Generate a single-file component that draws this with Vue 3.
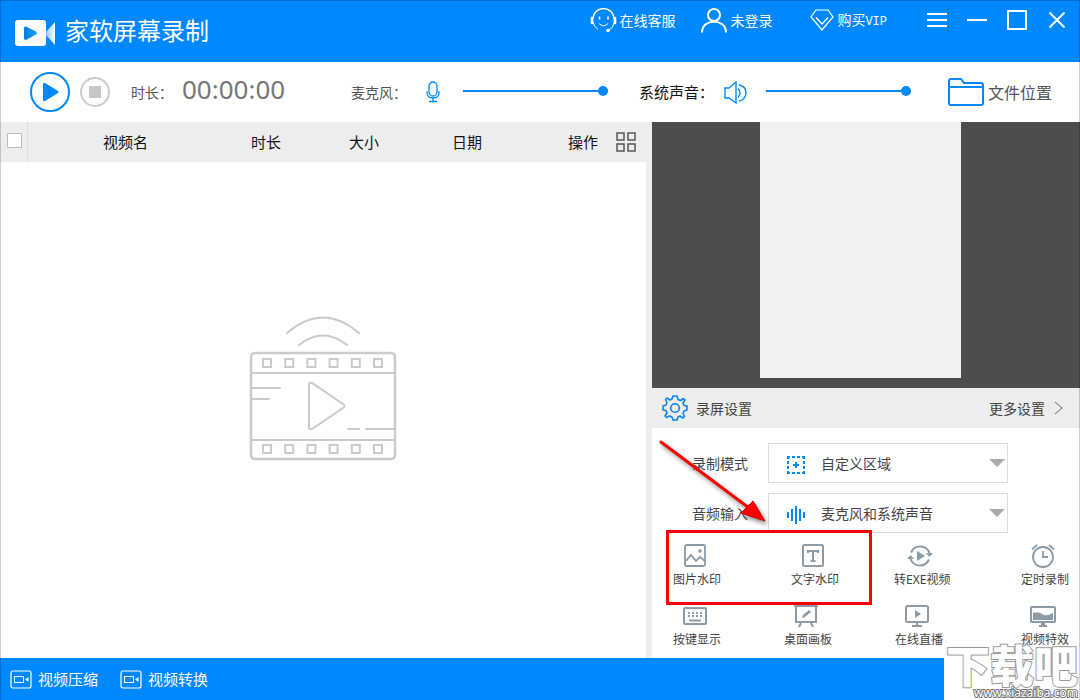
<script setup>
import { ref } from 'vue'

const micVolume = ref(100)
const systemVolume = ref(100)
const mode = ref('自定义区域')
const audio = ref('麦克风和系统声音')
const allSelected = ref(false)
const holes = [0, 1, 2, 3, 4, 5]
</script>

<template>
  <div class="app">
    <header class="titlebar">
      <svg class="logo" width="40" height="26" viewBox="0 0 40 26">
        <defs>
          <linearGradient id="lens" x1="0" x2="1"><stop offset="0" stop-color="#8fcbff" /><stop offset="1" stop-color="#fff" /></linearGradient>
          <linearGradient id="tri" x1="0" x2="1"><stop offset="0" stop-color="#0a78d8" /><stop offset="1" stop-color="#12a8ff" /></linearGradient>
        </defs>
        <rect width="31" height="26" rx="3" fill="#fff" />
        <path d="M31 12 40 2v23l-9-10z" fill="url(#lens)" />
        <path d="M9 8Q9 6 11 6.500L21 11.500Q23 13 21 14.500L11 20Q9 20.500 9 18z" fill="url(#tri)" />
      </svg>
      <h1>家软屏幕录制</h1>
      <nav class="links">
        <a href="#" class="service">
          <svg width="27" height="25" viewBox="0 0 27 25" fill="none" stroke="#fff">
            <path d="M3 11A10.500 10.500 0 0 1 24 11" stroke-width="1.300" />
            <path d="M2 10v5M25 10v5" stroke-width="2.600" stroke-linecap="round" />
            <path d="M3 14Q4 19 8 21.500M24 15Q23 20 19 22" />
            <circle cx="18" cy="22.500" r="1.800" fill="#fff" stroke="none" />
            <path d="M9.500 8.500v3M18 8.500v3" stroke-width="1.600" />
            <path d="M9 15.500q4.500 4.500 9 0" />
          </svg>
          <span>在线客服</span>
        </a>
        <a href="#" class="login">
          <svg width="26" height="25" viewBox="0 0 26 25" fill="none" stroke="#fff" stroke-width="2">
            <circle cx="13" cy="7" r="6" /><path d="M1 24.500C1 10 25 10 25 24.500" />
          </svg>
          <span>未登录</span>
        </a>
        <a href="#" class="vip">
          <svg width="24" height="22" viewBox="0 0 24 22" fill="none" stroke="#fff" stroke-width="1.200">
            <path d="M6 1h12l5 7-11 13L1 8zM6 8.500l6 6.500 6-6.500" />
          </svg>
          <span>购买<span class="mono">VIP</span></span>
        </a>
      </nav>
      <div class="window">
        <button type="button" aria-label="菜单"><svg width="20" height="20"><path d="M0 4h20M0 10h20M0 16h20" /></svg></button>
        <button type="button" aria-label="最小化"><svg width="20" height="20"><path d="M0 10h20" /></svg></button>
        <button type="button" aria-label="最大化"><svg width="20" height="20"><path d="M1 1h18v18H1z" /></svg></button>
        <button type="button" aria-label="关闭"><svg width="20" height="20"><path d="M2.500 2.500l15 15m0-15l-15 15" /></svg></button>
      </div>
    </header>

    <section class="toolbar">
      <button type="button" class="play" aria-label="开始录制">
        <svg width="18" height="20" viewBox="0 0 18 20"><path d="M1 2Q1 0 3 1L16 9q1.500 1 0 2L3 19q-2 1-2-1z" fill="#0088ff" /></svg>
      </button>
      <button type="button" class="stop" aria-label="停止"><i></i></button>
      <span class="label time-label">时长：</span>
      <output class="timer">00:00:00</output>
      <label class="label mic-label" for="mic">麦克风：</label>
      <svg class="mic" width="14" height="22" viewBox="0 0 14 22" fill="none" stroke="#0088ff" stroke-width="1.300">
        <rect x="3" y="1" width="8" height="14" rx="4" />
        <path d="M1 10v1.500q0 5.500 6 5.500t6-5.500V10M7 17v3.500M3 20.500h8" />
      </svg>
      <input id="mic" v-model="micVolume" type="range" min="0" max="100" />
      <label class="system-label" for="system">系统声音：</label>
      <svg class="speaker" width="24" height="24" viewBox="0 0 24 24" fill="none" stroke="#0088ff" stroke-width="1.400">
        <path d="M1 7h4l7-6v21l-7-5H1zM14 7.500q4 4.500 0 9M15 4q7.500 1.500 7 8.500Q21 19 15 20" />
      </svg>
      <input id="system" v-model="systemVolume" type="range" min="0" max="100" />
      <button type="button" class="folder">
        <svg width="36" height="28" viewBox="0 0 36 28" fill="none" stroke="#0088ff" stroke-width="2">
          <path d="M1 9V3q0-2 2-2h10l3 4h17q2 0 2 2v2zM1 9v16q0 2 2 2h30q2 0 2-2V9" />
        </svg>
        <span>文件位置</span>
      </button>
    </section>

    <main>
      <section class="videos">
        <table>
          <thead>
            <tr>
              <th class="c-check"><input v-model="allSelected" type="checkbox" aria-label="全选" /></th>
              <th class="c-name">视频名</th>
              <th class="c-time">时长</th>
              <th class="c-size">大小</th>
              <th class="c-date">日期</th>
              <th class="c-act">
                <div class="act">
                  <span>操作</span>
                  <button type="button" aria-label="网格视图">
                    <svg width="20" height="20" viewBox="0 0 20 20" fill="none" stroke="#555" stroke-width="1.500">
                      <path d="M1 1h7v7H1zM12 1h7v7h-7zM1 12h7v7H1zM12 12h7v7h-7z" />
                    </svg>
                  </button>
                </div>
              </th>
            </tr>
          </thead>
        </table>
        <div class="empty">
          <svg width="148" height="146" viewBox="0 0 148 146" fill="none" stroke="#cbcbcb" stroke-width="2" stroke-linecap="round">
            <path d="M38 17Q74-14 110 17M50 29q24-19 48 0" />
            <rect x="2" y="37" width="144" height="106" rx="4" stroke-width="2.500" />
            <path d="M2 57h144M2 124h144M3 72h28M3 83h17M99 113h11M117 113h28" />
            <path d="M60 69q0-3 3-2l31 21q3 2 0 4l-31 21q-3 1-3-2z" />
            <g stroke-linecap="butt">
              <rect v-for="n in holes" :key="'t' + n" :x="14 + n * 22.200" y="43" width="8" height="8" />
              <rect v-for="n in holes" :key="'b' + n" :x="14 + n * 22.200" y="129" width="8" height="8" />
            </g>
          </svg>
        </div>
      </section>

      <aside>
        <div class="preview"><div class="screen"></div></div>
        <div class="settings-head">
          <svg width="26" height="26" viewBox="-13 -13 26 26" fill="none" stroke="#0a84e8" stroke-width="1.600" stroke-linejoin="round">
            <path d="M-2-12H2L3-8.500 5.500-7.500 8.500-9.500 10-8 8-5 9-2.500 12-2V2L9 3 8 5.500 9.500 8.500 8 10 5 8 3 9 2 12H-2L-3 9-5.500 8-8.500 9.500-10 8-8 5-9 2.500-12 2V-2L-9-3-8-5.500-9.500-8.500-8-10-5-8-3-9z" />
            <circle r="4.300" />
          </svg>
          <h2>录屏设置</h2>
          <a href="#">更多设置
            <svg width="9" height="14" viewBox="0 0 9 14" fill="none" stroke="#666"><path d="M1 1l7 6-7 6" /></svg>
          </a>
        </div>
        <div class="settings">
          <div class="field">
            <label for="mode">录制模式</label>
            <div class="picker">
              <svg class="lead" width="20" height="20" viewBox="0 0 20 20" fill="none" stroke="#0088ff" stroke-width="2">
                <path d="M1 2h3M6 2h3M11 2h3M16 2h3M1 18h3M6 18h3M11 18h3M16 18h3M2 1v3M2 6v3M2 11v3M2 16v3M18 1v3M18 6v3M18 11v3M18 16v3M7 10h6M10 7v6" />
              </svg>
              <select id="mode" v-model="mode"><option>自定义区域</option></select>
              <svg class="caret" width="16" height="8"><path d="M0 0h16L8 8z" fill="#aaa" /></svg>
            </div>
          </div>
          <div class="field">
            <label for="audio">音频输入</label>
            <div class="picker">
              <svg class="lead" width="20" height="20" viewBox="0 0 20 20" fill="none" stroke="#0088ff" stroke-width="2">
                <path d="M2 7v6M6 4v12M10 1v18M14 4v12M18 7v6" />
              </svg>
              <select id="audio" v-model="audio"><option>麦克风和系统声音</option></select>
              <svg class="caret" width="16" height="8"><path d="M0 0h16L8 8z" fill="#aaa" /></svg>
            </div>
          </div>

          <div class="tools">
            <div class="row first">
              <button type="button">
                <svg width="26" height="24" viewBox="0 0 26 24" fill="none" stroke="#8c9ba5" stroke-width="1.800">
                  <rect x="3" y="1" width="20" height="21" rx="1.500" /><path d="M4 17l5-6 5 6 4-4 5 4" /><circle cx="18" cy="7" r="1.800" fill="#8c9ba5" stroke="none" />
                </svg>
                <span>图片水印</span>
              </button>
              <button type="button">
                <svg width="26" height="24" viewBox="0 0 26 24" fill="none" stroke="#8c9ba5" stroke-width="2">
                  <rect x="3" y="1" width="20" height="21" rx="1.500" /><path d="M8 9V7h10v2M13 7v10M10.500 17h5" />
                </svg>
                <span>文字水印</span>
              </button>
              <button type="button">
                <svg width="26" height="24" viewBox="0 0 26 24" fill="none" stroke="#8c9ba5" stroke-width="2">
                  <path d="M4 8.500A10 10 0 0 1 22.500 9M22 15.500A10 10 0 0 1 3.500 15" />
                  <path d="M19 9h7l-3.500 4zM0 15h7l-3.500-4zM10 7l8 5-8 5z" fill="#8c9ba5" stroke="none" />
                </svg>
                <span>转EXE视频</span>
              </button>
              <button type="button">
                <svg width="26" height="24" viewBox="0 0 26 24" fill="none" stroke="#8c9ba5" stroke-width="1.800">
                  <circle cx="13" cy="13" r="10" /><path d="M13 7v6h5" /><path d="M2 5.500 7 1M24 5.500 19 1" />
                </svg>
                <span>定时录制</span>
              </button>
            </div>
            <div class="row second">
              <button type="button">
                <svg width="26" height="24" viewBox="0 0 26 24" fill="none" stroke="#8c9ba5" stroke-width="2">
                  <rect x="2" y="4" width="22" height="16" rx="1" />
                  <path d="M6 9h14M6 12h14" stroke-dasharray="2 2" /><path d="M7 16.500h12" />
                </svg>
                <span>按键显示</span>
              </button>
              <button type="button">
                <svg width="26" height="24" viewBox="0 0 26 24" fill="none" stroke="#8c9ba5" stroke-width="2">
                  <path d="M1 2h24M3 2v16h20V2M8 19l-2 4M18 19l2 4" /><path d="M9 14l1-3 6-5 2 2-6 5z" fill="#8c9ba5" stroke="none" />
                </svg>
                <span>桌面画板</span>
              </button>
              <button type="button">
                <svg width="26" height="24" viewBox="0 0 26 24" fill="none" stroke="#8c9ba5" stroke-width="2">
                  <rect x="2" y="2" width="22" height="16" rx="1.500" /><path d="M13 18v4M8 22h10" /><path d="M11 6l6 4-6 4z" fill="#8c9ba5" stroke="none" />
                </svg>
                <span>在线直播</span>
              </button>
              <button type="button">
                <svg width="26" height="24" viewBox="0 0 26 24" fill="none" stroke="#8c9ba5" stroke-width="2">
                  <rect x="1" y="3" width="24" height="15" rx="1" /><path d="M9 22h8M11 20h4" />
                  <path d="M3 9q5-2 9 1t11-1v7H3z" fill="#8c9ba5" stroke="none" />
                </svg>
                <span>视频特效</span>
              </button>
            </div>
          </div>

          <div class="highlight"></div>
          <svg class="arrow" width="124" height="104" viewBox="0 0 124 104">
            <path d="M9 14 97 80" stroke="#f00" stroke-width="3" stroke-linecap="round" />
            <path d="M113 93 101 73 95 79 89 85z" fill="#f00" stroke="#c00" />
          </svg>
        </div>
      </aside>
    </main>

    <footer>
      <button type="button">
        <svg width="22" height="19" viewBox="0 0 22 19" fill="none" stroke="#fff" stroke-width="1.200">
          <rect x="1" y="1" width="20" height="17" rx="2" /><rect x="4.500" y="6.500" width="9" height="6" stroke-width="1" /><path d="M15 9.500 18.500 7v5z" fill="#fff" stroke="none" />
        </svg>
        <span>视频压缩</span>
      </button>
      <button type="button">
        <svg width="22" height="19" viewBox="0 0 22 19" fill="none" stroke="#fff" stroke-width="1.200">
          <rect x="1" y="1" width="20" height="17" rx="2" /><rect x="4.500" y="6.500" width="9" height="6" stroke-width="1" /><path d="M15 9.500 18.500 7v5z" fill="#fff" stroke="none" />
        </svg>
        <span>视频转换</span>
      </button>
      <div class="stamp">
        <strong>下载吧</strong>
        <small>www.xiazaiba.com</small>
      </div>
    </footer>
  </div>
</template>

<style>
body { margin: 0; }
</style>

<style scoped>
* { box-sizing: border-box; }
.app {
  position: relative;
  display: flex;
  flex-direction: column;
  min-height: 100vh;
  overflow: hidden;
  background: #fff;
  color: #444;
  font: 14px/20px "Noto Sans CJK SC", sans-serif;
}
.app::after {
  content: "";
  position: absolute;
  inset: 0;
  border: 1px solid rgba(0, 0, 0, 0.18);
  border-bottom: 0;
  pointer-events: none;
}
svg { display: block; flex: none; }
button {
  padding: 0;
  border: 0;
  background: none;
  color: inherit;
  font: inherit;
  cursor: pointer;
}
a { color: inherit; text-decoration: none; }
h1, h2 { margin: 0; font-weight: 400; }

.titlebar {
  display: flex;
  align-items: center;
  height: 62px;
  padding: 0 3px 0 15px;
  background: #0088ff;
  color: #fff;
}
.logo { margin-top: 4px; }
h1 { margin: 0 0 2px 10px; font-size: 24px; line-height: 32px; }
.links { display: flex; align-self: flex-start; margin-left: auto; height: 40px; }
.links a { display: flex; align-items: center; gap: 2px; }
.links .login { margin-left: 26px; gap: 3px; }
.links .vip { margin: 0 30px 0 38px; gap: 3px; }
.mono { font: 12px/20px "Liberation Mono", monospace; }
.window { display: flex; align-self: flex-start; height: 40px; }
.window button { display: grid; place-items: center; width: 40px; }
.window path { fill: none; stroke: #fff; stroke-width: 2; }

.toolbar {
  display: flex;
  align-items: center;
  height: 60px;
  padding: 0 28px 0 30px;
}
.play, .stop { display: grid; place-items: center; border-radius: 50%; flex: none; }
.play { width: 40px; height: 40px; border: 2px solid #0088ff; padding-left: 2px; }
.stop { width: 30px; height: 30px; margin-left: 10px; border: 2px solid #ccc; }
.stop i { width: 12px; height: 12px; background: #c8c8c8; }
.toolbar > span, .toolbar > label { white-space: nowrap; }
.label { color: #555; }
.time-label { margin-left: 21px; }
.timer { width: 104px; margin: 0 65px 6px 9px; color: #777; font: 26px/36px "Noto Sans", sans-serif; }
.mic { margin: 0 23px 0 19px; }
.system-label { margin-left: 31px; color: #111; font-size: 15px; }
.speaker { margin: 2px 18px 0 10px; }
input[type="range"] {
  appearance: none;
  width: 145px;
  height: 10px;
  margin: 0 0 2px;
  background: linear-gradient(#0088ff, #0088ff) center / 100% 2px no-repeat;
}
input[type="range"]::-webkit-slider-thumb {
  appearance: none;
  width: 10px;
  height: 10px;
  border-radius: 50%;
  background: #0088ff;
}
.folder { display: flex; align-items: center; gap: 4px; margin-left: auto; color: #555; font-size: 16px; }

main { display: flex; flex: 1; }
.videos { display: flex; flex: 1; flex-direction: column; border-right: 6px solid #ededed; }
table { width: 100%; table-layout: fixed; border-spacing: 0; background: #ededed; }
th { height: 40px; padding: 0; color: #111; font-size: 15px; font-weight: 400; text-align: center; }
.c-check { width: 28px; border-right: 1px solid #ddd; }
.c-check input {
  appearance: none;
  display: block;
  width: 15px;
  height: 15px;
  margin: 0 0 4px 7px;
  border: 1px solid #bbb;
  border-radius: 1px;
  background: #fff;
}
.c-name { width: 195px; }
.c-time { width: 86px; }
.c-size { width: 110px; }
.c-date { width: 96px; }
.act { display: flex; align-items: center; justify-content: flex-end; gap: 18px; padding-right: 10px; }
.empty { display: grid; flex: 1; place-items: center; padding-bottom: 42px; }

aside { display: flex; flex-direction: column; width: 428px; }
.preview { display: flex; height: 266px; padding: 0 119px 10px 108px; background: #4d4d4d; }
.screen { flex: 1; background: #f1f1f1; }
.settings-head {
  display: flex;
  align-items: center;
  height: 40px;
  padding: 0 17px 0 10px;
  background: #ededed;
}
h2 { margin-left: 8px; font-size: 14px; }
.settings-head a { display: flex; align-items: center; gap: 9px; margin-left: auto; }
.settings { position: relative; flex: 1; padding-top: 15px; }
.field { display: flex; align-items: center; gap: 20px; margin: 0 72px 10px 40px; }
.picker { position: relative; flex: 1; }
select {
  appearance: none;
  display: block;
  width: 100%;
  height: 40px;
  padding: 0 30px 0 52px;
  border: 1px solid #ddd;
  border-radius: 0;
  background: #fff;
  color: #444;
  font: inherit;
}
.lead { position: absolute; left: 18px; top: 12px; pointer-events: none; }
.caret { position: absolute; right: 3px; top: 16px; pointer-events: none; }
.tools { display: grid; gap: 16px; padding: 1px 0 0 21px; font: 12px/16px "Noto Sans", "Noto Sans CJK SC", sans-serif; }
.row { display: grid; justify-items: start; }
.first { grid-template-columns: 118px 103px 127px auto; }
.second { grid-template-columns: 111px 111px 126px auto; }
.row button { display: flex; flex-direction: column; align-items: center; gap: 4px; white-space: nowrap; }
.row svg { margin-right: 4px; }
.highlight {
  position: absolute;
  left: 14px;
  top: 102px;
  width: 206px;
  height: 75px;
  border: 3px solid #f00;
}
.arrow { position: absolute; left: 0; top: 0; filter: drop-shadow(2px 3px 2px rgba(0, 0, 0, 0.45)); pointer-events: none; }

footer {
  position: relative;
  display: flex;
  align-items: center;
  gap: 22px;
  height: 42px;
  padding-left: 10px;
  background: #0088ff;
  color: #fff;
  font-size: 15px;
}
footer button { display: flex; align-items: center; gap: 6px; }
.stamp {
  position: absolute;
  right: 0;
  bottom: 0;
  width: 136px;
  padding-right: 2px;
  background: linear-gradient(transparent 16px, #fff 16px);
  text-align: right;
  white-space: nowrap;
}
.stamp strong, .stamp small {
  display: block;
  color: #fff;
  paint-order: stroke fill;
}
.stamp strong { font-size: 44px; line-height: 44px; font-weight: 900; -webkit-text-stroke: 2px #999; }
.stamp small { font: 12px/14px "Noto Sans", sans-serif; -webkit-text-stroke: 2px #777; }
</style>
